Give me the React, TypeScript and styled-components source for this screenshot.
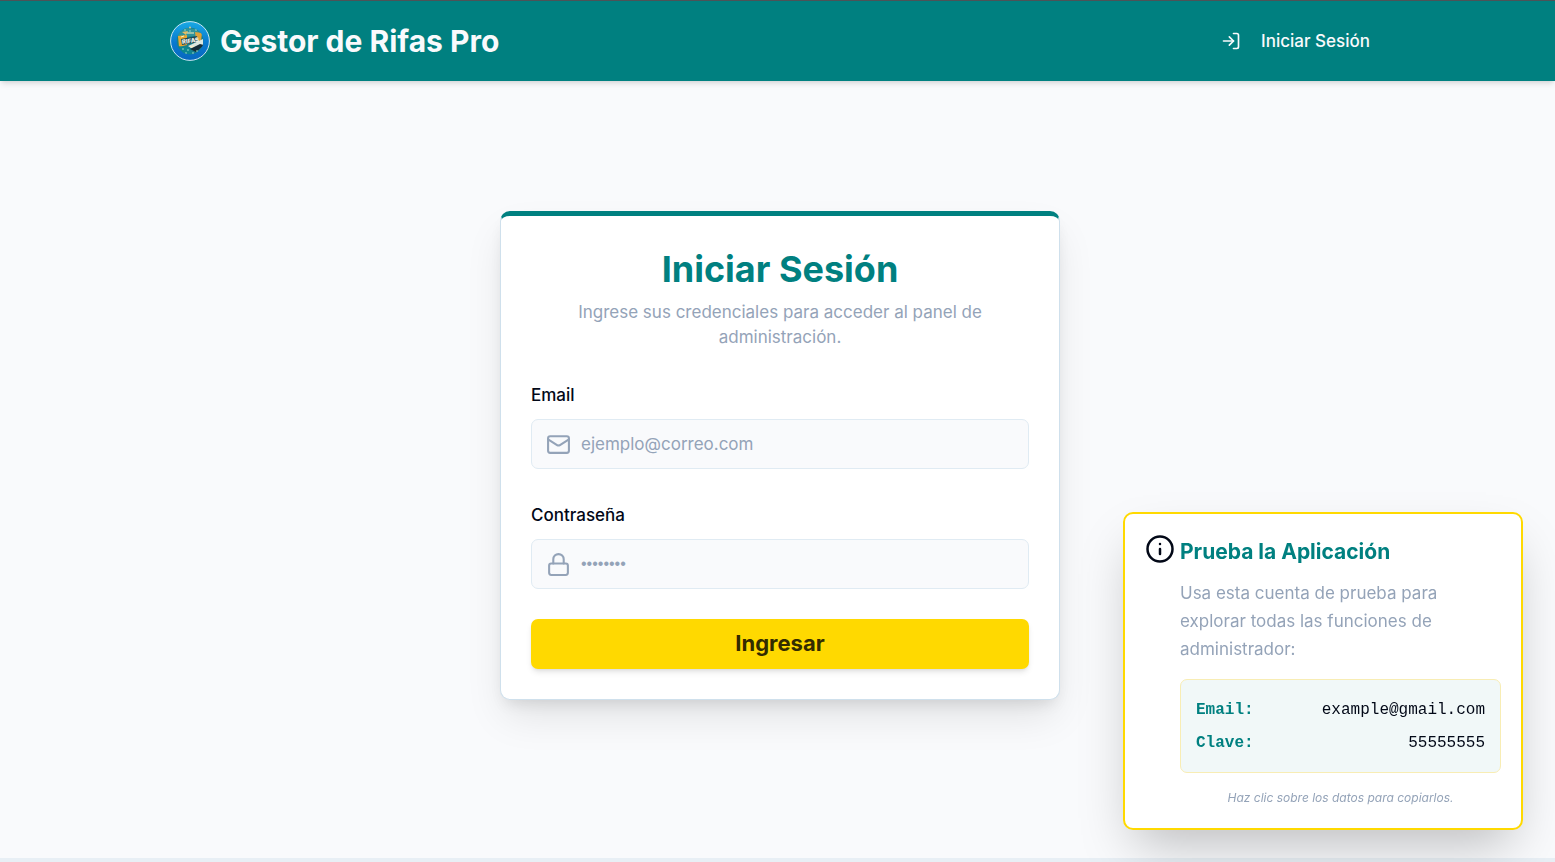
import React from 'react';
import styled, { createGlobalStyle } from 'styled-components';
import { Info, Lock, LogIn, Mail } from 'lucide-react';

const teal = '#008080';
const gold = '#ffd900';
const ink = '#020817';
const muted = '#94a3b8';
const surface = '#f9fafc';

const GlobalStyle = createGlobalStyle`
  * { box-sizing: border-box; }
  html, body { margin: 0; }
  body {
    background: ${surface};
    color: ${ink};
    font-family: Inter, "Liberation Sans", sans-serif;
  }
  h1, h2, p, dl, dd { margin: 0; }
  button, input { font: inherit; }
`;

const Page = styled.div`
  display: flex;
  flex-direction: column;
  min-height: 100vh;
`;

const Header = styled.header`
  padding: 0 20px 0 25px;
  background: ${teal};
  border-top: 1px solid #4d5357;
  box-shadow: 0 4px 6px -1px rgba(0, 0, 0, 0.1), 0 2px 4px -2px rgba(0, 0, 0, 0.1);
`;

const HeaderInner = styled.div`
  display: flex;
  align-items: center;
  justify-content: space-between;
  height: 80px;
  max-width: 1220px;
  margin: 0 auto;
`;

const Brand = styled.a`
  display: flex;
  align-items: center;
  gap: 10px;
  color: ${surface};
  font-size: 30px;
  font-weight: 700;
  line-height: 40px;
  text-decoration: none;
`;

const NavLink = styled.a`
  display: flex;
  align-items: center;
  gap: 20px;
  padding: 0 20px;
  color: ${surface};
  font-size: 17px;
  font-weight: 500;
  line-height: 24px;
  text-decoration: none;
`;

const Main = styled.main`
  display: flex;
  flex: 1;
  align-items: center;
  justify-content: center;
  padding: 52px 20px 80px 25px;
`;

const LoginCard = styled.form`
  width: 100%;
  max-width: 560px;
  padding: 29px 30px 30px;
  background: #fff;
  border: 1px solid #cfe0ec;
  border-top: 5px solid ${teal};
  border-radius: 10px;
  box-shadow: 0 20px 40px -5px rgba(0, 0, 0, 0.1), 0 8px 16px -6px rgba(0, 0, 0, 0.12);
`;

const CardHeading = styled.div`
  padding: 0 40px;
  margin-bottom: 29px;
  text-align: center;
`;

const CardTitle = styled.h1`
  color: ${teal};
  font-size: 36px;
  font-weight: 700;
  line-height: 48px;
`;

const CardText = styled.p`
  margin-top: 7px;
  color: ${muted};
  font-size: 17px;
  line-height: 25px;
`;

const Field = styled.div`
  display: flex;
  flex-direction: column;
  gap: 8px;
  margin-bottom: 30px;
`;

const Label = styled.label`
  font-size: 17px;
  font-weight: 500;
  line-height: 32px;
`;

const InputBox = styled.div`
  display: flex;
  align-items: center;
  gap: 10px;
  height: 50px;
  padding: 0 14px;
  color: ${muted};
  background: ${surface};
  border: 1px solid #e0ebf3;
  border-radius: 7px;
`;

const Input = styled.input`
  flex: 1;
  min-width: 0;
  padding: 0;
  color: ${ink};
  font-size: 17px;
  line-height: 24px;
  background: transparent;
  border: 0;
  outline: 0;
  &::placeholder { color: ${muted}; opacity: 1; }
  &[type='password'] {
    font-family: "Liberation Sans", sans-serif;
    font-size: 16px;
  }
`;

const SubmitButton = styled.button`
  display: block;
  width: 100%;
  height: 50px;
  padding: 0 0 2px;
  color: #332b00;
  font-size: 22px;
  font-weight: 700;
  background: ${gold};
  border: 0;
  border-radius: 7px;
  box-shadow: 0 4px 6px -1px rgba(0, 0, 0, 0.1), 0 2px 4px -2px rgba(0, 0, 0, 0.1);
  cursor: pointer;
`;

const HelpCard = styled.aside`
  position: fixed;
  right: 32px;
  bottom: 32px;
  display: flex;
  align-items: flex-start;
  gap: 5px;
  width: 400px;
  padding: 20px;
  background: #fff;
  border: 2px solid ${gold};
  border-radius: 10px;
  box-shadow: 0 25px 50px -12px rgba(0, 0, 0, 0.25);
`;

const HelpBody = styled.div`
  flex: 1;
  min-width: 0;
`;

const HelpTitle = styled.h2`
  color: ${teal};
  font-size: 21px;
  font-weight: 700;
  line-height: 36px;
`;

const HelpText = styled.p`
  margin-top: 9px;
  color: ${muted};
  font-size: 17px;
  line-height: 28px;
`;

const Credentials = styled.dl`
  display: flex;
  flex-direction: column;
  gap: 5px;
  margin-top: 16px;
  padding: 16px 15px 15px;
  background: #f1f8f8;
  border: 1px solid #f8edb4;
  border-radius: 7px;
`;

const CredentialRow = styled.div`
  display: flex;
  justify-content: space-between;
  font-family: "Liberation Mono", monospace;
  font-size: 16px;
  line-height: 28px;
  cursor: pointer;
  dt { color: ${teal}; font-weight: 700; }
`;

const HelpNote = styled.p`
  margin-top: 15px;
  color: ${muted};
  font-size: 12px;
  font-style: italic;
  line-height: 20px;
  text-align: center;
`;

const Footer = styled.footer`
  height: 4px;
  background: #e8eff5;
`;

const Logo = () => (
  <svg width="40" height="40" viewBox="0 0 40 40" aria-hidden="true">
    <defs>
      <linearGradient id="ring" x1="0" y1="0" x2="0" y2="1">
        <stop offset="0" stopColor="#19a9e4" />
        <stop offset="0.55" stopColor="#0878cf" />
        <stop offset="1" stopColor="#0867be" />
      </linearGradient>
      <clipPath id="disc"><circle cx="20" cy="20" r="13.5" /></clipPath>
    </defs>
    <circle cx="20" cy="20" r="19.4" fill="url(#ring)" stroke="#c9e6f2" strokeWidth="1" />
    <g clipPath="url(#disc)">
      <circle cx="20" cy="20" r="13.5" fill="#167f8b" />
      <path d="M8 12l8-5 10 1 6 6-24 3z" fill="#2e939b" />
      <path d="M8 15l9-1v10l-8 2z" fill="#eca72f" />
      <path d="M25 11l7 1-1 8-5-1z" fill="#dea13a" />
      <path d="M12 11l6-1-2 4z" fill="#e4bd65" />
      <path d="M11 18l16-3 1 6-16 3z" fill="#224852" />
      <path d="M18 25l15-7v6l-9 5z" fill="#dbe6df" />
      <path d="M20 28l10-5 4 1-8 7z" fill="#152d38" />
      <path d="M8 25l11 2 3 7-9-2z" fill="#0b8790" />
      <path d="M12 28h2m3 1h2m-4 3h2m5 0h2m2-2h2M14 9h2m3 1h2m4-1h2" stroke="#93d4c6" strokeWidth="1" />
      <path d="M17 12h7M20 26l4-1M11 16l3-1" stroke="#fff0bc" strokeWidth="1" />
      <text x="12" y="22" fill="#f7f8ef" fontFamily="Inter, sans-serif" fontSize="6" fontWeight="800" transform="rotate(-8 19 20)">RIFAS</text>
    </g>
    <circle cx="20" cy="6.5" r="1" fill="#d7c892" />
  </svg>
);

export default function App() {
  return (
    <Page>
      <GlobalStyle />
      <Header>
        <HeaderInner>
          <Brand href="#"><Logo />Gestor de Rifas Pro</Brand>
          <NavLink href="#login"><LogIn size={20} strokeWidth={2} />Iniciar Sesión</NavLink>
        </HeaderInner>
      </Header>
      <Main>
        <LoginCard id="login" onSubmit={(event) => event.preventDefault()}>
          <CardHeading>
            <CardTitle>Iniciar Sesión</CardTitle>
            <CardText>Ingrese sus credenciales para acceder al panel de administración.</CardText>
          </CardHeading>
          <Field>
            <Label htmlFor="email">Email</Label>
            <InputBox>
              <Mail size={25} />
              <Input id="email" type="email" placeholder="ejemplo@correo.com" />
            </InputBox>
          </Field>
          <Field>
            <Label htmlFor="password">Contraseña</Label>
            <InputBox>
              <Lock size={25} />
              <Input id="password" type="password" placeholder="••••••••" />
            </InputBox>
          </Field>
          <SubmitButton type="submit">Ingresar</SubmitButton>
        </LoginCard>
      </Main>
      <Footer />
      <HelpCard>
        <Info size={30} />
        <HelpBody>
          <HelpTitle>Prueba la Aplicación</HelpTitle>
          <HelpText>Usa esta cuenta de prueba para explorar todas las funciones de administrador:</HelpText>
          <Credentials>
            <CredentialRow><dt>Email:</dt><dd>example@gmail.com</dd></CredentialRow>
            <CredentialRow><dt>Clave:</dt><dd>55555555</dd></CredentialRow>
          </Credentials>
          <HelpNote>Haz clic sobre los datos para copiarlos.</HelpNote>
        </HelpBody>
      </HelpCard>
    </Page>
  );
}
